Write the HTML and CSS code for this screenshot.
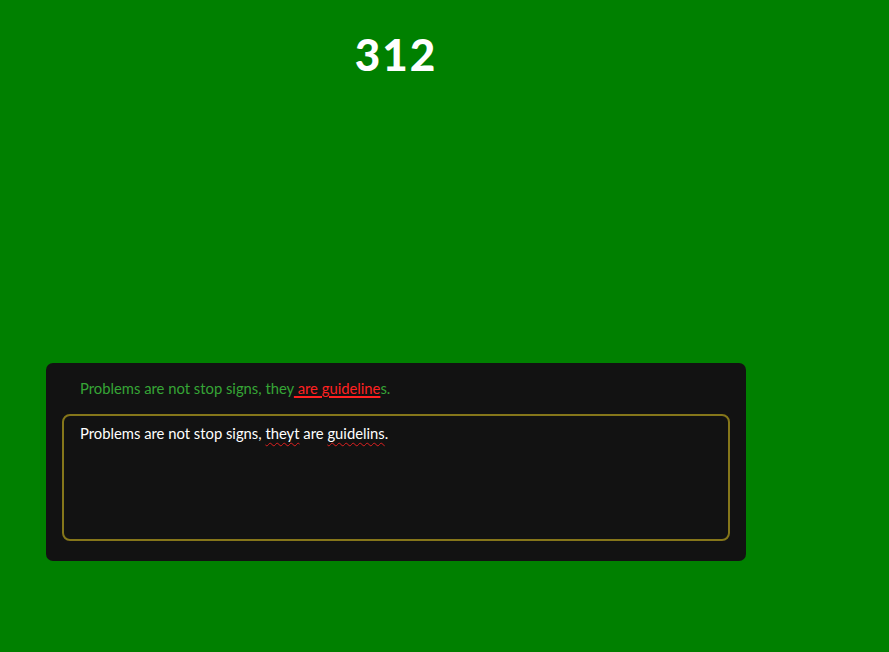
FILE: index.html
```html
<!DOCTYPE html>
<html>
<head>
<meta charset="utf-8">
<link rel="stylesheet" href="styles.css">
</head>
<body>
<div class="wrap">
  <h1 class="score">312</h1>
  <div class="card">
    <p class="target">Problems are not stop signs, they<span class="err"> are guideline</span>s.</p>
    <div class="input">Problems are not stop signs, <span class="typo">theyt</span> are <span class="typo">guidelins</span>.</div>
  </div>
</div>
</body>
</html>
```
FILE: styles.css
```css
html, body {
  margin: 0;
  padding: 0;
  background: #008000;
  font-family: Lato, "Open Sans", sans-serif;
}
.wrap {
  width: 700px;
  margin-left: 46px;
  padding-top: 28px;
}
.score {
  margin: 0;
  text-align: center;
  color: #fff;
  font-size: 44px;
  font-weight: 900;
  letter-spacing: 2px;
  line-height: 52px;
  height: 54px;
}
.card {
  margin-top: 281px;
  background: #121212;
  border-radius: 7px;
  padding: 16px 16px 20px;
  height: 162px;
}
.target {
  margin: 0 0 0 18px;
  color: #36a536;
  font-size: 14.8px;
  line-height: 19px;
  height: 35px;
}
.err {
  color: #ff2121;
  text-decoration: underline;
  text-decoration-thickness: 1.5px;
  text-underline-offset: 2px;
}
.input {
  box-sizing: border-box;
  height: 127px;
  border: 2px solid #85761a;
  border-radius: 8px;
  padding: 8px 16px;
  color: #fff;
  font-size: 14.8px;
  line-height: 19px;
}
.typo {
  text-decoration: underline wavy #e02020;
  text-decoration-thickness: 1px;
  text-underline-offset: 3px;
}
```
